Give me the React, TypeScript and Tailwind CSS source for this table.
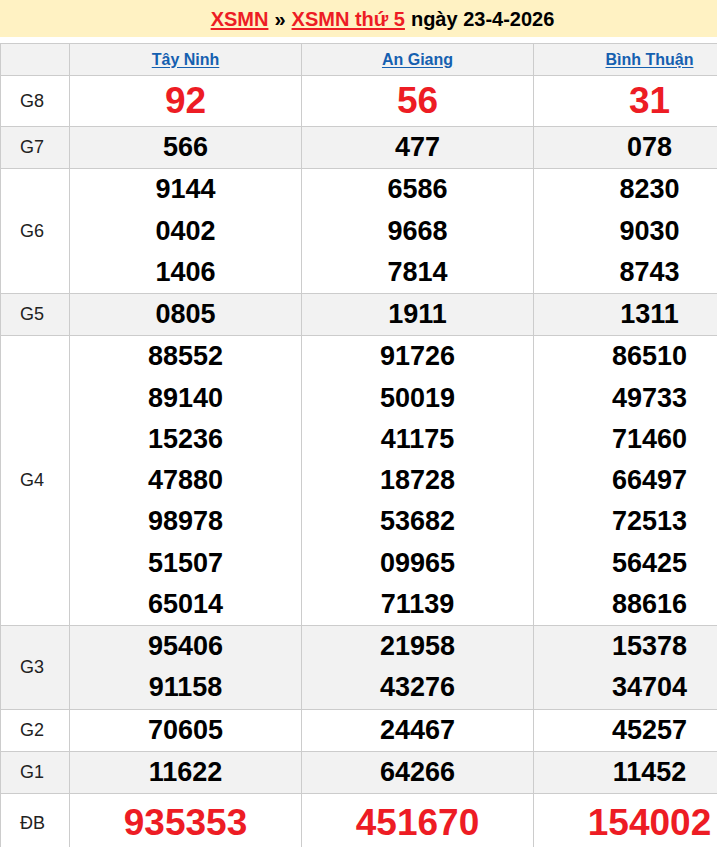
import React from 'react';

const provinces = ['Tây Ninh', 'An Giang', 'Bình Thuận'];

type Prize = { label: string; values: string[][]; kind?: 'g8' | 'db' };

const prizes: Prize[] = [
  { label: 'G8', kind: 'g8', values: [['92'], ['56'], ['31']] },
  { label: 'G7', values: [['566'], ['477'], ['078']] },
  {
    label: 'G6',
    values: [
      ['9144', '0402', '1406'],
      ['6586', '9668', '7814'],
      ['8230', '9030', '8743'],
    ],
  },
  { label: 'G5', values: [['0805'], ['1911'], ['1311']] },
  {
    label: 'G4',
    values: [
      ['88552', '89140', '15236', '47880', '98978', '51507', '65014'],
      ['91726', '50019', '41175', '18728', '53682', '09965', '71139'],
      ['86510', '49733', '71460', '66497', '72513', '56425', '88616'],
    ],
  },
  {
    label: 'G3',
    values: [
      ['95406', '91158'],
      ['21958', '43276'],
      ['15378', '34704'],
    ],
  },
  { label: 'G2', values: [['70605'], ['24467'], ['45257']] },
  { label: 'G1', values: [['11622'], ['64266'], ['11452']] },
  { label: 'ĐB', kind: 'db', values: [['935353'], ['451670'], ['154002']] },
];

const App = () => {
  return (
    <div className="w-[717px] overflow-hidden bg-white" style={{ fontFamily: '"Liberation Sans", Arial, sans-serif' }}>
      <div className="w-[765px]">
        {/* Title band */}
        <div className="h-[37px] bg-[#fff2c3] flex items-center justify-center text-[20px] font-bold text-black">
          <span className="text-[#ed1c24] underline decoration-2 underline-offset-2">XSMN</span>
          <span className="mx-[6px]">»</span>
          <span className="text-[#ed1c24] underline decoration-2 underline-offset-2">XSMN thứ 5</span>
          <span className="ml-[6px]">ngày 23-4-2026</span>
        </div>

        <table className="mt-[6px] w-[765px] table-fixed border-collapse">
          <colgroup>
            <col className="w-[69px]" />
            <col className="w-[232px]" />
            <col className="w-[232px]" />
            <col className="w-[232px]" />
          </colgroup>
          <thead>
            <tr className="h-[32px] bg-[#f2f2f2]">
              <th className="border border-[#cccccc]"></th>
              {provinces.map((p) => (
                <th key={p} className="border border-[#cccccc] text-center text-[16px] font-bold text-[#1560b0]">
                  <span className="underline underline-offset-2">{p}</span>
                </th>
              ))}
            </tr>
          </thead>
          <tbody>
            {prizes.map((prize, i) => (
              <tr key={prize.label} className={i % 2 === 1 ? 'bg-[#f2f2f2]' : 'bg-white'}>
                <td className="border border-[#cccccc] pl-[19px] text-[18px] text-[#222222]">{prize.label}</td>
                {prize.values.map((col, j) => (
                  <td key={j} className="border border-[#cccccc] p-0 text-center font-bold">
                    {col.map((v) =>
                      prize.kind === 'g8' ? (
                        <div key={v} className="text-[37px] leading-[50px] text-[#ed1c24]">{v}</div>
                      ) : prize.kind === 'db' ? (
                        <div key={v} className="text-[37px] leading-[58px] text-[#ed1c24]">{v}</div>
                      ) : (
                        <div key={v} className="text-[27px] leading-[41.25px] text-black">{v}</div>
                      )
                    )}
                  </td>
                ))}
              </tr>
            ))}
          </tbody>
        </table>
      </div>
    </div>
  );
};

export default App;
